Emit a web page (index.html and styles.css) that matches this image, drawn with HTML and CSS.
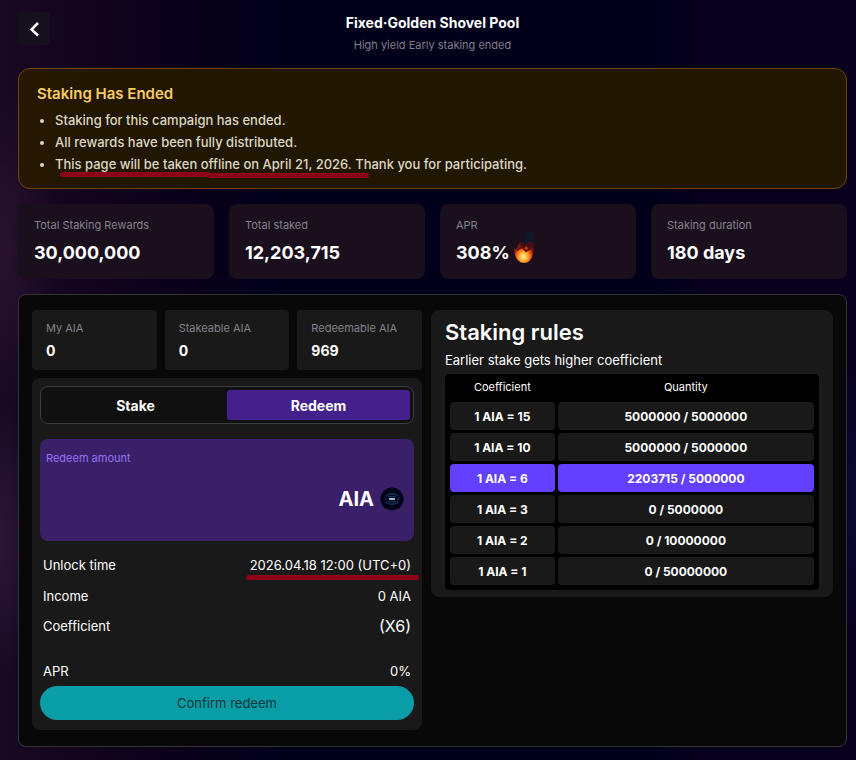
FILE: index.html
```html
<!DOCTYPE html>
<html lang="en">
<head>
    <meta charset="UTF-8">
    <meta name="viewport" content="width=device-width, initial-scale=1.0">
    <title>Fixed·Golden Shovel Pool</title>
    <link rel="stylesheet" href="styles.css">
</head>
<body>
    <div class="page">
        <header class="header">
            <button class="back" type="button" aria-label="Back">
                <svg width="16" height="16" viewBox="0 0 16 16" fill="none" stroke="#fff" stroke-width="2.5"><path d="M12 2 5.500 8.500l6.500 6"/></svg>
            </button>
            <div class="heading">
                <h1>Fixed·Golden Shovel Pool</h1>
                <p>High yield Early staking ended</p>
            </div>
        </header>

        <section class="notice">
            <h2>Staking Has Ended</h2>
            <ul>
                <li>Staking for this campaign has ended.</li>
                <li>All rewards have been fully distributed.</li>
                <li><span class="marked">This page will be taken offline on April 21, 2026. </span>Thank you for participating.</li>
            </ul>
        </section>

        <section class="stats">
            <div class="stat">
                <p>Total Staking Rewards</p>
                <strong>30,000,000</strong>
            </div>
            <div class="stat">
                <p>Total staked</p>
                <strong>12,203,715</strong>
            </div>
            <div class="stat">
                <p>APR</p>
                <strong>308%
                    <svg class="flame" width="24" height="32" viewBox="0 0 24 32">
                        <defs>
                            <radialGradient id="fire" cx="50%" cy="68%" r="55%">
                                <stop offset="0" stop-color="#fff09a"/>
                                <stop offset=".4" stop-color="#ffb033"/>
                                <stop offset=".75" stop-color="#e84a10"/>
                                <stop offset="1" stop-color="#7a1505"/>
                            </radialGradient>
                        </defs>
                        <path d="M13 1h8v11h-8z" fill="#0d1828"/>
                        <path d="M5 13c2-3 4-4 6-3l2 3 4-4 5 2v9H4z" fill="#401018"/>
                        <path d="M2 16c1 1 2 1 3 1 0-3 1-5 4-6-1 3 0 5 2 6 2-1 3-3 3-4 2 1 2 3 2 4 2 0 3-1 4-3 2 5 1 10-1 13-2 3-4 4-7 4-6 0-10-6-10-15z" fill="url(#fire)"/>
                        <path d="M5 18l5-3 4 4 5-3" fill="none" stroke="#5a1208" stroke-width="2"/>
                    </svg>
                </strong>
            </div>
            <div class="stat">
                <p>Staking duration</p>
                <strong>180 days</strong>
            </div>
        </section>

        <main class="panel">
            <div class="account">
                <div class="balances">
                    <div class="balance">
                        <p>My AIA</p>
                        <strong>0</strong>
                    </div>
                    <div class="balance">
                        <p>Stakeable AIA</p>
                        <strong>0</strong>
                    </div>
                    <div class="balance">
                        <p>Redeemable AIA</p>
                        <strong>969</strong>
                    </div>
                </div>

                <form class="redeem">
                    <div class="tabs">
                        <button type="button">Stake</button>
                        <button type="button" class="active">Redeem</button>
                    </div>

                    <div class="amount">
                        <label for="amount">Redeem amount</label>
                        <div class="amount-row">
                            <input id="amount" type="text">
                            <span>AIA</span>
                            <svg width="24" height="24" viewBox="0 0 24 24">
                                <circle cx="12" cy="12" r="11.5" fill="#02031a"/>
                                <g fill="none" stroke="#0c4c70">
                                    <path d="M6 9l3-2h6l3 2"/>
                                    <path d="M6 15l3 2h6l3-2"/>
                                    <path d="M8 9.500h8M8 14.500h8" stroke="#0a3658"/>
                                    <path d="M5 12h2M17 12h2"/>
                                </g>
                                <rect x="9" y="11" width="6" height="2" fill="#a9b4cc"/>
                            </svg>
                        </div>
                    </div>

                    <dl class="details">
                        <div><dt>Unlock time</dt><dd class="marked">2026.04.18 12:00 (UTC+0)</dd></div>
                        <div><dt>Income</dt><dd>0 AIA</dd></div>
                        <div class="coefficient"><dt>Coefficient</dt><dd>(X6)</dd></div>
                        <div><dt>APR</dt><dd>0%</dd></div>
                    </dl>

                    <button type="button" class="confirm">Confirm redeem</button>
                </form>
            </div>

            <section class="rules">
                <h2>Staking rules</h2>
                <p>Earlier stake gets higher coefficient</p>
                <table>
                    <thead>
                        <tr><th>Coefficient</th><th>Quantity</th></tr>
                    </thead>
                    <tbody>
                        <tr><td>1 AIA = 15</td><td>5000000 / 5000000</td></tr>
                        <tr><td>1 AIA = 10</td><td>5000000 / 5000000</td></tr>
                        <tr class="current"><td>1 AIA = 6</td><td>2203715 / 5000000</td></tr>
                        <tr><td>1 AIA = 3</td><td>0 / 5000000</td></tr>
                        <tr><td>1 AIA = 2</td><td>0 / 10000000</td></tr>
                        <tr><td>1 AIA = 1</td><td>0 / 50000000</td></tr>
                    </tbody>
                </table>
            </section>
        </main>
    </div>
</body>
</html>
```
FILE: styles.css
```css
* {
    box-sizing: border-box;
}

body {
    margin: 0;
    min-height: 100vh;
    font-family: Inter, "Liberation Sans", sans-serif;
    font-size: 13px;
    color: #fff;
    background:
        radial-gradient(ellipse 60px 160px at 0 250px, #29122f, transparent),
        radial-gradient(ellipse 40px 140px at 0 540px, #2b1738, transparent),
        radial-gradient(ellipse 30px 150px at 100% 500px, #0c0a34, transparent),
        linear-gradient(90deg, #190a22 0, #10031c 12%, #07001b 26%, #00001b 34%, #00001b 76%, #08001c 82%, #08001c 100%);
}

h1, h2, p, ul, dl, dd {
    margin: 0;
}

button, input {
    font-family: inherit;
    color: inherit;
    border: 0;
    padding: 0;
}

.page {
    padding: 12px 9px 13px 18px;
}

/* Header */
.header {
    position: relative;
    height: 56px;
}

.back {
    position: absolute;
    left: 0;
    top: 0;
    width: 32px;
    height: 33px;
    display: flex;
    align-items: center;
    justify-content: center;
    background: #150f1e;
    border-radius: 4px;
}

.heading {
    text-align: center;
}

.heading h1 {
    font-size: 14px;
    line-height: 22px;
    font-weight: 700;
}

.heading p {
    font-size: 11px;
    line-height: 22px;
    color: #807f89;
}

/* Campaign notice */
.notice {
    padding: 14px 18px 12px;
    border: 1px solid #704600;
    border-radius: 12px;
    background: linear-gradient(90deg, #291700, #211700 8%);
}

.notice h2 {
    font-size: 15px;
    line-height: 22px;
    font-weight: 600;
    color: #f9cb62;
    margin-bottom: 4px;
}

.notice ul {
    padding-left: 18px;
    margin-bottom: 1px;
}

.notice li {
    line-height: 22px;
    font-weight: 500;
    color: #dcd6c5;
}

/* Red pen strokes under the dates */
.marked {
    position: relative;
}

.marked::after,
.notice .marked::before {
    content: "";
    position: absolute;
    left: -4px;
    right: -8px;
    bottom: -7px;
    height: 5px;
    border-radius: 3px;
    background: #8e0018;
}

.notice .marked::before {
    left: 5px;
    right: 48%;
    bottom: -5px;
}

.notice .marked::after {
    left: 51%;
    right: -14px;
    bottom: -6px;
}

/* Pool stats */
.stats {
    display: grid;
    grid-template-columns: repeat(4, 1fr);
    gap: 15px;
    margin: 15px 0;
}

.stat {
    height: 75px;
    padding: 12px 16px;
    border-radius: 8px;
    background: #190f1d;
}

.stat p,
.balance p {
    font-size: 11px;
    line-height: 18px;
    color: #85818a;
}

.stat strong {
    display: flex;
    align-items: center;
    gap: 2px;
    height: 36px;
    font-size: 18px;
    font-weight: 700;
}

.flame {
    margin-top: -8px;
}

/* Main panel */
.panel {
    display: grid;
    grid-template-columns: minmax(0, 390fr) minmax(0, 402fr);
    gap: 9px;
    align-items: start;
    padding: 15px 13px 16px;
    border: 1px solid #333;
    border-radius: 8px;
    background: #080808;
}

.balances {
    display: grid;
    grid-template-columns: repeat(3, 1fr);
    gap: 8px;
    margin-bottom: 8px;
}

.balance {
    height: 60px;
    padding: 9px 14px;
    border-radius: 4px;
    background: #191919;
}

.balance p {
    white-space: nowrap;
}

.balance strong {
    display: block;
    font-size: 14px;
    line-height: 28px;
}

.redeem {
    padding: 8px 8px 10px;
    border-radius: 8px;
    background: #191919;
}

.tabs {
    display: grid;
    grid-template-columns: 1fr 1fr;
    padding: 3px;
    border: 1px solid #3d3d3d;
    border-radius: 8px;
    background: #101010;
}

.tabs button {
    height: 30px;
    font-size: 14px;
    font-weight: 700;
    border-radius: 3px;
    background: none;
}

.tabs .active {
    background: #43208b;
}

.amount {
    height: 102px;
    margin: 15px 0 8px;
    padding: 10px 10px 10px 6px;
    border-radius: 8px;
    background: #3a2069;
}

.amount label {
    display: block;
    font-size: 11px;
    line-height: 18px;
    color: #9572f2;
}

.amount-row {
    display: flex;
    align-items: center;
    gap: 6px;
    height: 64px;
    font-size: 20px;
    font-weight: 700;
}

.amount-row input {
    flex: 1;
    min-width: 0;
    height: 30px;
    font-size: 20px;
    text-align: right;
    background: none;
    outline: none;
}

.details {
    padding: 0 3px;
}

.details div {
    display: flex;
    align-items: center;
    justify-content: space-between;
    height: 31px;
}

.details .coefficient {
    align-items: flex-start;
    height: 44px;
    line-height: 31px;
}

.coefficient dd {
    font-size: 16px;
}

.confirm {
    display: block;
    width: 100%;
    height: 34px;
    font-size: 13px;
    color: #073638;
    border-radius: 17px;
    background: #099da7;
}

/* Staking rules */
.rules {
    padding: 8px 14px 7px;
    border-radius: 8px;
    background: #191919;
}

.rules h2 {
    font-size: 22px;
    line-height: 28px;
    font-weight: 600;
}

.rules p {
    line-height: 28px;
}

.rules table {
    width: 100%;
    table-layout: fixed;
    padding: 0 2px 2px;
    border-collapse: separate;
    border-spacing: 3px;
    border-radius: 4px;
    background: #000;
}

.rules th {
    height: 22px;
    padding: 0 0 2px;
    font-size: 11px;
    font-weight: 400;
}

.rules th:first-child {
    width: 29%;
}

.rules td {
    height: 28px;
    padding: 0;
    font-size: 12px;
    font-weight: 700;
    text-align: center;
    border-radius: 4px;
    background: #191919;
}

.rules .current td {
    background: #6340ff;
}
```
